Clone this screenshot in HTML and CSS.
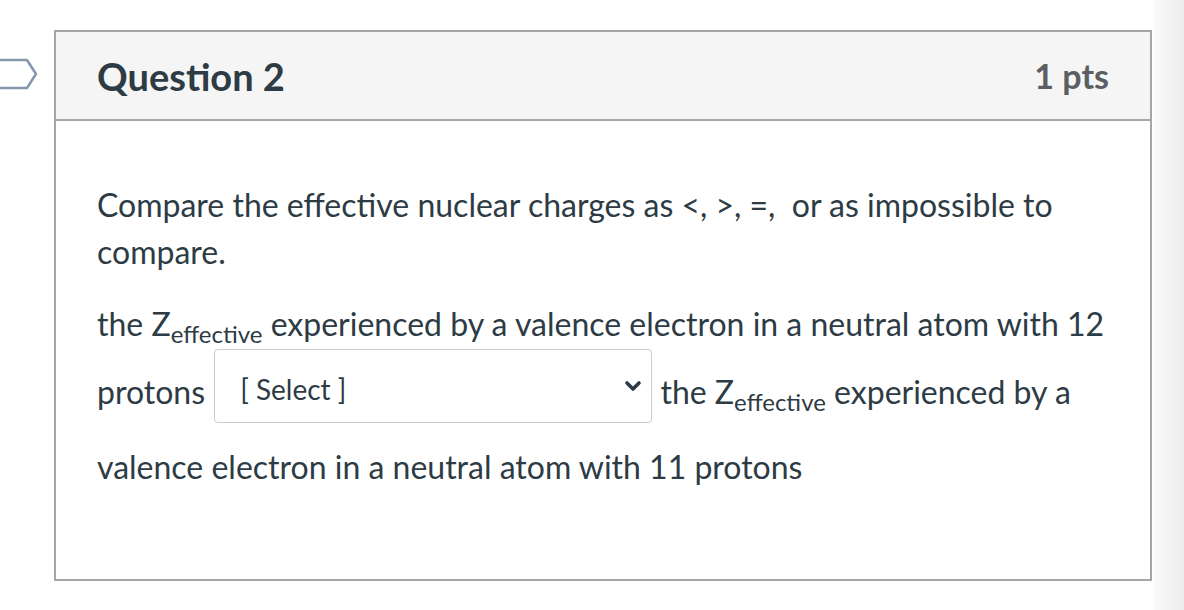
FILE: index.html
```html
<!DOCTYPE html>
<html lang="en">
<head>
<meta charset="utf-8">
<title>Question 2</title>
<link rel="stylesheet" href="styles.css">
</head>
<body>
<div class="page">
  <div class="flag-col">
    <svg class="flag" width="40" height="36" viewBox="0 0 40 36" aria-hidden="true">
      <path d="M-4 3 H27 L36 17 L27 31 H-4" fill="none" stroke="#8497ad" stroke-width="2.5" stroke-linejoin="round"/>
    </svg>
  </div>
  <div class="card">
    <div class="card-header">
      <h2 class="title">Question 2</h2>
      <span class="pts">1 pts</span>
    </div>
    <div class="card-body">
      <p class="para">Compare the effective nuclear charges as &lt;, &gt;, =,&nbsp; or as impossible to compare.</p>
      <p class="para">the Z<sub class="sub">effective</sub> experienced by a valence electron in a neutral atom with 12 protons <span class="select"><span class="select-text">[ Select ]</span><svg class="chevron" width="18" height="12" viewBox="0 0 18 12" aria-hidden="true"><path d="M3 3 L9 9 L15 3" fill="none" stroke="#2d3b45" stroke-width="3.6" stroke-linecap="round" stroke-linejoin="round"/></svg></span> the Z<sub class="sub">effective</sub> experienced by a valence electron in a neutral atom with 11 protons</p>
    </div>
  </div>
</div>
</body>
</html>
```

FILE: styles.css
```css
html {
  background: linear-gradient(to right, #ffffff 1152px, #f8f8f8 1156px, #ececec 1184px);
  min-height: 100%;
}

body {
  margin: 0;
  font-family: Lato, "Open Sans", "Noto Sans", sans-serif;
  color: #2d3b45;
}

.page {
  display: flex;
  padding-top: 30px;
}

.flag-col {
  width: 54px;
  flex: none;
}

.flag {
  display: block;
  margin-top: 27px;
}

.card {
  width: 1098px;
  height: 551px;
  box-sizing: border-box;
  border: 2px solid #a6a6a6;
  background: #ffffff;
  display: flex;
  flex-direction: column;
}

.card-header {
  height: 89px;
  box-sizing: border-box;
  background: #f5f5f5;
  border-bottom: 2px solid #a6a6a6;
  display: flex;
  align-items: center;
  justify-content: space-between;
  padding: 0 41px 0 41px;
}

.title {
  margin: 0;
  font-size: 38px;
  font-weight: 700;
  color: #2d3b45;
  line-height: 1;
}

.pts {
  font-size: 34px;
  font-weight: 700;
  color: #5b5f63;
  line-height: 1;
}

.card-body {
  padding: 60px 40px 0 41px;
}

.para {
  margin: 0 0 25px 0;
  font-size: 32px;
  line-height: 47px;
}

.sub {
  font-size: 24px;
  vertical-align: -7px;
  line-height: 1;
}

.select {
  display: inline-flex;
  align-items: flex-start;
  justify-content: space-between;
  width: 438px;
  height: 74px;
  box-sizing: border-box;
  border: 1px solid #c7cdd1;
  border-radius: 4px;
  padding: 22px 9px 0 25px;
  margin: 2px 0 20px 1px;
  vertical-align: 4px;
  background: #ffffff;
}

.select-text {
  font-size: 28px;
  line-height: 34px;
  color: #2d3b45;
}

.chevron {
  align-self: center;
  margin-top: -22px;
}
```
